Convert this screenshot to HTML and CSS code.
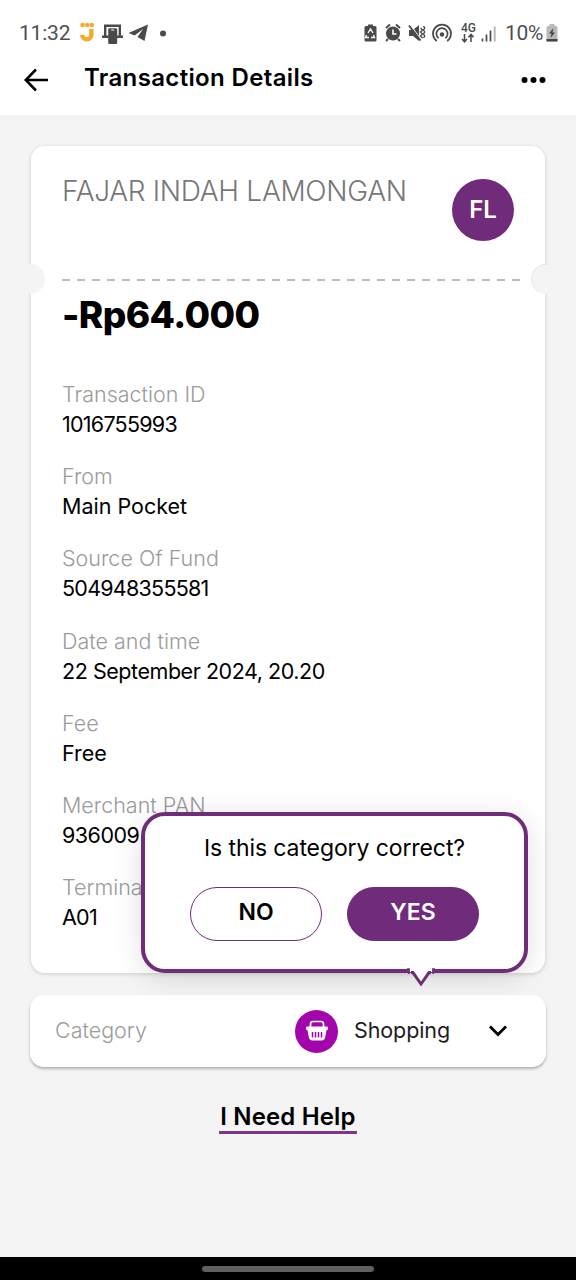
FILE: index.html
```html
<!DOCTYPE html>
<html lang="en">
<head>
<meta charset="utf-8">
<title>Transaction Details</title>
<link rel="stylesheet" href="styles.css">
</head>
<body>
<div class="screen">
  <div class="status">
    <span class="clock">11:32</span>
    <svg class="status-left" width="98" height="24" viewBox="0 0 98 24">
      <g fill="#f6a92c"><circle cx="3.600" cy="4" r="2.300"/><circle cx="8.300" cy="4" r="2.300"/><circle cx="12.800" cy="4" r="2.300"/></g>
      <path d="M12.400 8v5.800a4.600 4.600 0 0 1-9.200 0" fill="none" stroke="#f6a92c" stroke-width="4.400"/>
      <path d="M26.200 16V4.700h14.600V16M23 15.800h6.500M37.500 15.800H44" fill="none" stroke="#4a4a4a" stroke-width="2.400"/>
      <g fill="#4a4a4a"><rect x="29.200" y="7.200" width="9" height="15.800" rx="1.300"/><path d="M69 3.500 49.500 12l6.200 2.600L64 8l-5.500 8 7 4z"/><circle cx="84" cy="12.500" r="3"/></g>
      <path d="M32.200 9h3" stroke="#fff"/>
    </svg>
    <span class="spacer"></span>
    <svg class="status-right" width="134" height="24" viewBox="0 0 134 24">
      <g fill="#4a4a4a">
        <path d="M4 3.500h5V5h2q1.500 0 1.500 1.500V19q0 1.500-1.500 1.500H2Q.500 20.500.500 19V6.500Q.500 5 2 5h2z"/>
        <circle cx="29" cy="12.500" r="7"/><path d="m22 7 4-3.500M36 7l-4-3.500M24 18l-2 2M34 18l2 2" stroke="#4a4a4a" stroke-width="2"/>
        <path d="M45 9h4l6-5v16l-6-5h-4z"/>
        <circle cx="78" cy="13.500" r="2.200"/>
        <text x="97" y="11" class="network">4G</text>
      </g>
      <path d="m4 12 2.500-4L9 12m.500 2 1 2.500H7M2.500 14l-1 2.500H5" fill="none" stroke="#fff" stroke-width="1.300"/>
      <path d="M29 8.500v4.500h3.500" fill="none" stroke="#fff" stroke-width="1.600"/>
      <path d="m46 3.500 11 15" stroke="#fff" stroke-width="1.200"/>
      <path d="m45 4.500 11.500 15" fill="none" stroke="#4a4a4a" stroke-width="2"/>
      <path d="M56.500 7l2 2-2 2 2 2-2 2 2 2M59.500 5l1.200 2-1.200 2 1.200 2-1.200 2 1.200 2-1.200 2" fill="none" stroke="#4a4a4a" stroke-width="1.400"/>
      <path d="M72.800 20a9 9 0 1 1 10.400 0M74.600 17.200a5.600 5.600 0 1 1 6.800 0" fill="none" stroke="#4a4a4a" stroke-width="1.700"/>
      <path d="M100.500 13v7.500M98 18l2.500 2.800L103 18M107 21v-7.500M104.500 16.200l2.500-2.800 2.500 2.800" fill="none" stroke="#4a4a4a" stroke-width="1.500"/>
      <path d="M118.500 20.500v-3M122.500 20.500v-7M126.500 20.500v-11" stroke="#4a4a4a" stroke-width="1.700"/>
      <path d="M130.700 20.500v-15" stroke="#b8b8b8" stroke-width="2"/>
    </svg>
    <span class="charge">10%</span>
    <svg class="battery" width="12" height="18" viewBox="0 0 12 18">
      <path d="M3.500 0h5v2H10q1.500 0 1.500 1.500v13q0 1-1.500 1H2q-1.500 0-1.500-1v-13Q.500 2 2 2h1.500z" fill="#b9b9b9"/>
      <path d="M.500 15h11v2.500H.500zM7.500 4 3 9.500h2.500L4.500 14 9 8.500H6.500z" fill="#444"/>
    </svg>
  </div>
  <header class="header">
    <svg class="back" width="24" height="24" viewBox="0 0 24 24"><path d="M12 1.500 1.700 12 12 22.500M2 12h22" fill="none" stroke="#000" stroke-width="2.600"/></svg>
    <h1 class="title">Transaction Details</h1>
    <svg class="more" width="26" height="6" viewBox="0 0 26 6"><circle cx="3.500" cy="3" r="3"/><circle cx="12.500" cy="3" r="3"/><circle cx="21.500" cy="3" r="3"/></svg>
  </header>
  <main class="content">
    <section class="ticket">
      <i class="notch notch-left"></i><i class="notch notch-right"></i>
      <div class="ticket-head">
        <h2 class="merchant">FAJAR INDAH LAMONGAN</h2>
        <div class="avatar">FL</div>
      </div>
      <div class="divider"></div>
      <div class="amount">-Rp64.000</div>
      <dl class="details">
        <div class="row"><dt>Transaction ID</dt><dd class="digits">1016755993</dd></div>
        <div class="row"><dt>From</dt><dd>Main Pocket</dd></div>
        <div class="row"><dt>Source Of Fund</dt><dd class="digits">504948355581</dd></div>
        <div class="row"><dt>Date and time</dt><dd class="date">22 September 2024, 20.20</dd></div>
        <div class="row"><dt>Fee</dt><dd>Free</dd></div>
        <div class="row"><dt>Merchant PAN</dt><dd class="pan">936009</dd></div>
        <div class="row"><dt>Terminal</dt><dd class="digits">A01</dd></div>
      </dl>
    </section>
    <section class="category">
      <span class="category-label">Category</span>
      <span class="category-icon">
        <svg width="24" height="22" viewBox="0 0 24 22" fill="none" stroke="#fff">
          <path d="M5.500 8V4q0-2.500 2.500-2.500h8q2.500 0 2.500 2.500v4" stroke-width="1.700"/>
          <path d="M1.500 7h21v2.500h-1.300l-1.700 8.500q-.4 2-2.500 2H7q-2.100 0-2.500-2L2.800 9.500H1.500z" fill="#fff" stroke-width="1"/>
          <path d="M7.500 12v5.500M10.500 12v5.500M13.500 12v5.500M16.500 12v5.500" stroke="#a305ad" stroke-width="1.500"/>
        </svg>
      </span>
      <span class="category-name">Shopping</span>
      <svg class="chevron" width="20" height="14" viewBox="0 0 20 14"><path d="m2 2.500 8 8 8-8" fill="none" stroke="#000" stroke-width="2.800"/></svg>
      <div class="popup">
        <p class="question">Is this category correct?</p>
        <div class="actions"><button class="btn">NO</button><button class="btn btn-yes">YES</button></div>
        <svg class="tail" width="30" height="22" viewBox="0 0 30 22">
          <path d="M3.500 0h23v4l-3 3-8.500 11L6.500 7l-3-3z" fill="#fff"/>
          <path d="M5 5.600h2L15 17l8-11.400h2" fill="none" stroke="#6f2d79" stroke-width="3"/>
          <path d="M1 2h3M2.800 2v5M29 2h-3M27.200 2v5" fill="none" stroke="#6f2d79" stroke-width="1.600"/>
        </svg>
      </div>
    </section>
    <a class="help">I Need Help</a>
  </main>
  <div class="navbar"><span class="handle"></span></div>
</div>
</body>
</html>
```
FILE: styles.css
```css
* { box-sizing: border-box; }
body { margin: 0; font-family: Inter, "Liberation Sans", sans-serif; background: #f4f4f4; color: #000; }
svg { display: block; flex: none; }
h1, h2, p, dl, dd { margin: 0; }

.screen { width: 576px; height: 1280px; display: flex; flex-direction: column; overflow: hidden; }

.status { height: 52px; padding: 14px 18px 0 19px; display: flex; align-items: center; background: #fff; font-family: Roboto, sans-serif; font-size: 21px; color: #505050; }
.clock { width: 60px; letter-spacing: -0.2px; }
.spacer { flex: 1; }
.status-right { margin-right: 7px; }
.network { font: 500 12px Roboto, sans-serif; }
.charge { width: 41px; white-space: nowrap; letter-spacing: -0.300px; }

.header { height: 63px; padding: 0 29px 12px 24px; display: flex; align-items: center; background: #fff; }
.back { margin-top: 5px; }
.title { flex: 1; margin-left: 36px; font-size: 24px; line-height: 30px; font-weight: 600; letter-spacing: 0.350px; }
.more { margin-top: 5px; }

.content { flex: 1; padding: 31px 30px 0; display: flex; flex-direction: column; align-items: center; }

.ticket { position: relative; width: 514px; height: 827px; padding: 0 31px; border-radius: 14px; background: #fff; box-shadow: 0 1px 4px rgba(0, 0, 0, .16); }
.notch { position: absolute; top: 118px; width: 17px; height: 30px; background: #f4f4f4; }
.notch-left { left: -3px; border-radius: 0 15px 15px 0; }
.notch-right { right: -3px; border-radius: 15px 0 0 15px; border: solid #e6e6e6; border-width: 1px 0 0 1px; }
.ticket-head { height: 133px; display: flex; justify-content: space-between; align-items: flex-start; }
.merchant { margin-top: 28px; font-size: 28px; line-height: 34px; font-weight: 350; letter-spacing: -0.300px; color: #777; white-space: nowrap; }
.avatar { width: 62px; height: 62px; margin-top: 33px; padding-bottom: 2px; display: flex; align-items: center; justify-content: center; border-radius: 50%; background: #702b7a; color: #fff; font-size: 24px; font-weight: 600; }
.divider { width: 458px; height: 2px; background: repeating-linear-gradient(90deg, #bcbcbc 0 8px, transparent 8px 15px); }
.amount { height: 67px; margin-top: 13px; font-size: 37px; line-height: 42px; font-weight: 800; letter-spacing: -0.600px; }
.details { padding-top: 18px; }
.row { height: 82.200px; font-size: 21.500px; line-height: 30px; white-space: nowrap; }
dt { color: #9b9b9b; font-weight: 350; }
.digits { letter-spacing: -0.750px; }
.pan { letter-spacing: -0.500px; }
.date { letter-spacing: -0.450px; }

.category { position: relative; width: 516px; height: 72px; margin-top: 22px; padding: 0 38px 0 25px; display: flex; align-items: center; border-radius: 14px; background: #fff; box-shadow: 0 2px 3px rgba(0, 0, 0, .28); font-size: 21.500px; line-height: 30px; }
.category-label { width: 240px; padding-bottom: 2px; color: #9b9b9b; font-weight: 350; }
.category-icon { width: 43px; height: 43px; display: flex; align-items: center; justify-content: center; border-radius: 50%; background: #a305ad; }
.category-name { flex: 1; margin-left: 16px; padding-bottom: 2px; color: #1d1d1d; letter-spacing: -0.100px; }

.popup { position: absolute; left: 111px; bottom: 94px; width: 387px; height: 161px; padding-top: 17px; border: 4px solid #6f2d79; border-radius: 24px; background: #fff; box-shadow: 0 5px 28px rgba(0, 0, 0, .13); text-align: center; }
.question { font-size: 23px; line-height: 30px; letter-spacing: -0.100px; }
.actions { margin-top: 24px; display: flex; justify-content: center; gap: 25px; }
.btn { width: 132px; height: 54px; padding: 0 0 5px; border: 1.500px solid #6f2d79; border-radius: 27px; background: #fff; color: #000; font: 600 23px Inter, sans-serif; }
.btn-yes { background: #702b7a; color: #fff; }
.tail { position: absolute; left: 261px; bottom: -20px; }

.help { margin-top: 33px; height: 34px; padding: 0 1px; border-bottom: 3px solid #7c3587; font-size: 24px; line-height: 34px; font-weight: 600; letter-spacing: 0.150px; }
.navbar { height: 23px; display: flex; justify-content: center; padding-top: 9px; background: #000; }
.handle { width: 172px; height: 6px; border-radius: 3px; background: #606060; }
```
